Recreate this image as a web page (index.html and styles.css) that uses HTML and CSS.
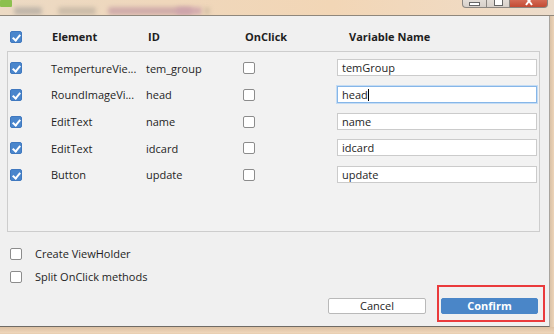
FILE: index.html
```html
<!DOCTYPE html>
<html lang="en">
<head>
    <meta charset="UTF-8">
    <title>Generate Butterknife Injections</title>
    <link rel="stylesheet" href="styles.css">
</head>
<body>
    <div class="window">
        <!-- Title bar (blurred background) -->
        <div class="titlebar">
            <div class="android"></div>
            <div class="blur b1"></div>
            <div class="blur b2"></div>
            <div class="blur b3"></div>
            <div class="blur b4"></div>
            <div class="blur b5"></div>
            <div class="controls">
                <div class="ctl ctl-min"><span></span></div>
                <div class="ctl ctl-max"><span></span></div>
                <div class="ctl ctl-close">
                    <svg width="10" height="8" viewBox="0 0 10 8"><path d="M2 -2 L8 6 M8 -2 L2 6" stroke="#fff" stroke-width="2"/></svg>
                </div>
            </div>
        </div>

        <div class="main">
            <div class="dialog">
                <div class="head-row">
                    <span class="check on"></span>
                    <span>Element</span>
                    <span>ID</span>
                    <span>OnClick</span>
                    <span>Variable Name</span>
                </div>

                <div class="panel">
                    <div class="row">
                        <span class="check on"></span>
                        <span>TempertureVie...</span>
                        <span>tem_group</span>
                        <span class="check"></span>
                        <span class="field">temGroup</span>
                    </div>
                    <div class="row">
                        <span class="check on"></span>
                        <span>RoundImageVi...</span>
                        <span>head</span>
                        <span class="check"></span>
                        <span class="field focus">head<i class="caret"></i></span>
                    </div>
                    <div class="row">
                        <span class="check on"></span>
                        <span>EditText</span>
                        <span>name</span>
                        <span class="check"></span>
                        <span class="field">name</span>
                    </div>
                    <div class="row">
                        <span class="check on"></span>
                        <span>EditText</span>
                        <span>idcard</span>
                        <span class="check"></span>
                        <span class="field">idcard</span>
                    </div>
                    <div class="row">
                        <span class="check on"></span>
                        <span>Button</span>
                        <span>update</span>
                        <span class="check"></span>
                        <span class="field">update</span>
                    </div>
                </div>

                <div class="options">
                    <label class="option"><span class="check"></span>Create ViewHolder</label>
                    <label class="option"><span class="check"></span>Split OnClick methods</label>
                </div>

                <div class="actions">
                    <button class="btn">Cancel</button>
                    <button class="btn primary">Confirm</button>
                </div>
            </div>
            <div class="frame-edge"></div>
        </div>
        <div class="frame-bottom"></div>

        <!-- red highlight around confirm -->
        <div class="highlight"></div>
    </div>
</body>
</html>
```

FILE: styles.css
```css
body {
    margin: 0;
    background: #e9cfb2;
    font-family: "Open Sans", "Noto Sans", sans-serif;
    font-size: 11px;
    color: #1e1e1e;
    overflow: hidden;
}

.window {
    position: relative;
    width: 554px;
    height: 334px;
}

/* title bar */
.titlebar {
    position: relative;
    height: 15px;
    border-bottom: 1px solid #8f877c;
    background: linear-gradient(90deg, #ecdac4 0%, #efd7bb 30%, #f2d6b6 60%, #f0dac2 85%, #ecdccb 100%);
    overflow: hidden;
}

.android {
    position: absolute;
    left: 0;
    top: -4px;
    width: 12px;
    height: 11px;
    border-radius: 6px 6px 1px 1px;
    background: #8cc04e;
}

.blur {
    position: absolute;
    top: 7px;
    height: 8px;
    border-radius: 3px;
    filter: blur(2px);
    opacity: 0.8;
}

.b1 { left: 14px; width: 28px; background: #b6aea4; }
.b2 { left: 58px; width: 38px; background: #c4b6a4; }
.b3 { left: 108px; width: 84px; background: #c9a2a6; }
.b4 { left: 176px; width: 26px; background: #cda2ac; }
.b5 { left: 204px; width: 6px; background: #d0bca4; }

.controls {
    position: absolute;
    right: 6px;
    top: -2px;
    display: flex;
}

.ctl {
    height: 9px;
    border: 1px solid #8a8580;
    border-top: none;
    background: linear-gradient(#e6e0da, #d7d0ca);
    display: flex;
    align-items: center;
    justify-content: center;
}

.ctl-min {
    width: 23px;
    border-radius: 0 0 0 4px;
}

.ctl-max {
    width: 22px;
    border-left: none;
}

.ctl-min span {
    width: 9px;
    height: 2px;
    background: #fff;
    border: 1px solid #666;
    margin-top: 3px;
}

.ctl-max span {
    width: 7px;
    height: 5px;
    border: 1px solid #666;
    background: #fff;
}

.ctl-close {
    width: 37px;
    border-left: none;
    border-radius: 0 0 4px 0;
    background: linear-gradient(#d8735e, #c34a33);
}

/* dialog body */
.main {
    display: flex;
}

.dialog {
    width: 549px;
    height: 310px;
    background: #f0f0f0;
    border-right: 1px solid #a8a49e;
    border-bottom: 1px solid #6f6b66;
}

.frame-edge {
    flex: 1;
    background: linear-gradient(90deg, #d9c1a6, #edd4b8);
}

.frame-bottom {
    height: 6px;
    background: linear-gradient(#dcc0a2, #efd6bb);
}

/* checkboxes */
.check {
    display: block;
    width: 12px;
    height: 12px;
    box-sizing: border-box;
    border: 1px solid #8c8c8c;
    border-radius: 2px;
    background: #fff;
    position: relative;
}

.check.on {
    border-color: #3f78bf;
    background: #4a86cc;
}

.check.on::after {
    content: "";
    position: absolute;
    left: 3px;
    top: 1px;
    width: 3px;
    height: 6px;
    border: solid #fff;
    border-width: 0 2px 2px 0;
    transform: rotate(40deg);
}

/* header */
.head-row {
    display: grid;
    grid-template-columns: 42px 96px 97px 104px auto;
    align-items: center;
    height: 12px;
    padding: 13px 0 0 10px;
    font-weight: bold;
}

/* list */
.panel {
    box-sizing: border-box;
    width: 533px;
    height: 181px;
    margin: 10px 0 0 7px;
    padding-top: 3px;
    border: 1px solid #cdcdcd;
    background: #f2f2f2;
}

.row {
    display: grid;
    grid-template-columns: 43px 95px 97px 94px 200px;
    align-items: center;
    height: 26.67px;
    padding-left: 2px;
    margin-left: -2px;
}

.row > .check:first-child {
    margin-left: 2px;
}

.field {
    display: block;
    box-sizing: border-box;
    height: 17px;
    line-height: 15px;
    padding-left: 4px;
    border: 1px solid #cbcbcb;
    background: #fff;
    margin-top: -1px;
}

.field.focus {
    border: 1px solid #86b6e8;
    box-shadow: 0 0 0 1px #c4dcf4;
}

.caret {
    display: inline-block;
    width: 1px;
    height: 12px;
    background: #000;
    vertical-align: -2px;
}

/* options */
.options {
    display: flex;
    flex-direction: column;
    margin: 10px 0 0 10px;
}

.option {
    display: flex;
    align-items: center;
    gap: 13px;
    height: 23px;
}

/* buttons */
.actions {
    display: flex;
    justify-content: flex-end;
    gap: 15px;
    margin-top: 10px;
    padding-right: 11px;
}

.btn {
    width: 98px;
    height: 16px;
    padding: 0;
    font-family: inherit;
    font-size: 11px;
    line-height: 14px;
    color: #1e1e1e;
    background: #fff;
    border: 1px solid #b9b9b9;
    border-radius: 2px;
}

.btn.primary {
    width: 97px;
    background: #4a86c8;
    border-color: #4a86c8;
    color: #fff;
    font-weight: bold;
}

.highlight {
    position: absolute;
    left: 437px;
    top: 285px;
    width: 104px;
    height: 33px;
    border: 2px solid #ea3a3c;
}
```
